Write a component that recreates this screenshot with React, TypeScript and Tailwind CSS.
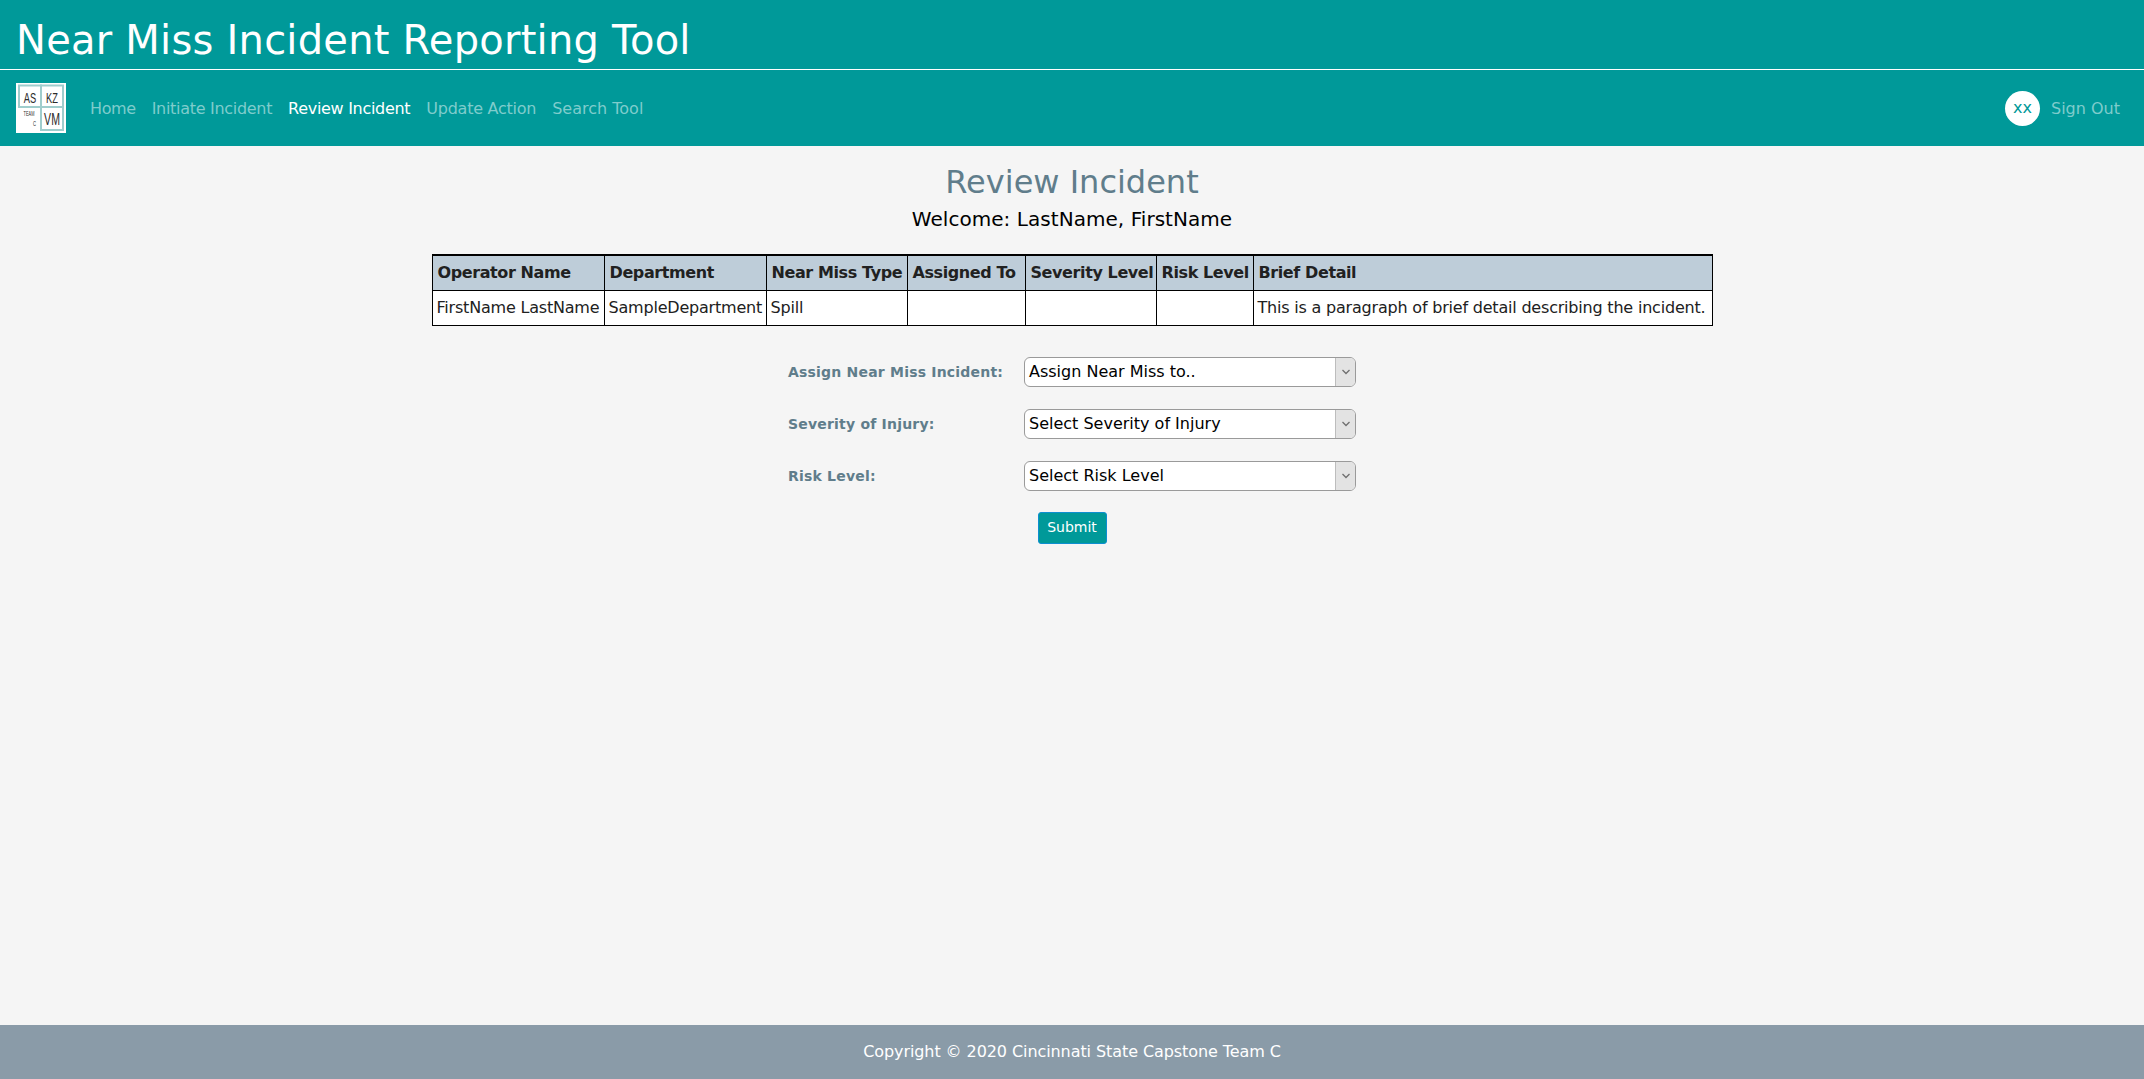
const navLinks = [
  { label: "Home", spacing: "tracking-[-0.4px]" },
  { label: "Initiate Incident", spacing: "tracking-[-0.3px]" },
  { label: "Review Incident", spacing: "tracking-[-0.3px]" },
  { label: "Update Action", spacing: "tracking-[-0.25px]" },
  { label: "Search Tool", spacing: "tracking-[0px]" },
];

const headers = [
  { label: "Operator Name", width: "w-[172px]" },
  { label: "Department", width: "w-[162px]" },
  { label: "Near Miss Type", width: "w-[141px]" },
  { label: "Assigned To", width: "w-[118px]" },
  { label: "Severity Level", width: "w-[131px]" },
  { label: "Risk Level", width: "w-[97px]" },
  { label: "Brief Detail", width: "w-[459px]" },
];
const row = ["FirstName LastName", "SampleDepartment", "Spill", "", "", "", "This is a paragraph of brief detail describing the incident."];

const fields = [
  { label: "Assign Near Miss Incident:", placeholder: "Assign Near Miss to.." },
  { label: "Severity of Injury:", placeholder: "Select Severity of Injury" },
  { label: "Risk Level:", placeholder: "Select Risk Level" },
];

const Logo = () => (
  <svg width="50" height="50" viewBox="0 0 50 50" className="block shrink-0">
    <rect width="50" height="50" fill="#fff" />
    <g fill="none" stroke="#9fcdcd" strokeWidth="2">
      <rect x="3" y="2.5" width="22" height="21.5" />
      <rect x="25" y="2.5" width="22" height="21.5" />
      <rect x="25" y="24" width="22" height="23" />
    </g>
    <g fontFamily="'Liberation Sans',sans-serif" fill="#2b2b2b" textAnchor="middle">
      <text transform="translate(14 20) scale(0.62 1)" fontSize="15">AS</text>
      <text transform="translate(36 20) scale(0.62 1)" fontSize="15">KZ</text>
      <text transform="translate(36 42) scale(0.66 1)" fontSize="16">VM</text>
      <text transform="translate(13 33) scale(0.6 1)" fontSize="6.5">TEAM</text>
      <text transform="translate(18.5 43) scale(0.6 1)" fontSize="7">C</text>
    </g>
  </svg>
);

const SelectBox = ({ text }: { text: string }) => (
  <div className="flex h-[30px] w-[332px] overflow-hidden rounded-[6px] border border-[#9a9a9a] bg-white">
    <span className="flex-1 pl-[4px] text-[16px] leading-[28px] text-black">{text}</span>
    <span className="flex w-[20px] items-center justify-center border-l border-[#bdbdbd] bg-[#e3e3e3]">
      <svg width="10" height="6" viewBox="0 0 10 6" fill="none" stroke="#6f6f6f" strokeWidth="1.3">
        <path d="M1.5 1l3.5 3.5L8.5 1" />
      </svg>
    </span>
  </div>
);

export default function App() {
  return (
    <div className="flex min-h-[1079px] flex-col bg-[#f5f5f5] font-['DejaVu_Sans',Verdana,sans-serif]">
      <header className="bg-[#009999]">
        <div className="h-[70px] border-b border-white pl-[16px]">
          <h1 className="text-[40px] leading-[80px] font-normal tracking-[0.23px] text-white">
            Near Miss Incident Reporting Tool
          </h1>
        </div>
        <nav className="flex h-[76px] items-center pr-[24px] pl-[16px]">
          <Logo />
          <ul className="ml-[16px] flex flex-1 items-center pt-[1px]">
            {navLinks.map((link) => (
              <li
                key={link.label}
                className={`px-[8px] text-[16px] ${link.spacing} ${link.label === "Review Incident" ? "text-white" : "text-[#7fcccc]"}`}
              >
                {link.label}
              </li>
            ))}
          </ul>
          <div className="flex h-[35px] w-[35px] items-center justify-center rounded-full bg-white text-[16px] text-[#009999]">
            xx
          </div>
          <span className="ml-[11px] pt-[1px] text-[16px] text-[#7fcccc]">Sign Out</span>
        </nav>
      </header>

      <main className="flex flex-1 flex-col items-center">
        <h2 className="mt-[14px] text-[32px] leading-[44px] font-normal text-[#607d8b]">Review Incident</h2>
        <p className="mt-[1px] text-[20px] leading-[28px] tracking-[0.05px] text-black">Welcome: LastName, FirstName</p>

        <table className="mt-[21px] w-[1280px] table-fixed border-collapse border-t-2 border-black bg-white text-[16px] text-[#212121]">
          <thead>
            <tr className="bg-[#becdd9]">
              {headers.map((h) => (
                <th
                  key={h.label}
                  className={`h-[35px] border border-black pt-[1px] pl-[5px] text-left font-bold tracking-[-0.4px] whitespace-nowrap ${h.width}`}
                >
                  {h.label}
                </th>
              ))}
            </tr>
          </thead>
          <tbody>
            <tr>
              {row.map((cell, i) => (
                <td key={i} className="h-[35px] border border-black pt-[1px] pl-[4px] tracking-[-0.2px] whitespace-nowrap">
                  {cell}
                </td>
              ))}
            </tr>
          </tbody>
        </table>

        <form className="mt-[31px] ml-[6px] flex w-[574px] flex-col gap-[22px]">
          {fields.map((f) => (
            <div key={f.label} className="flex items-center">
              <label className="w-[236px] pt-[1px] text-[14px] font-bold tracking-[0.2px] text-[#607d8b]">{f.label}</label>
              <SelectBox text={f.placeholder} />
            </div>
          ))}
        </form>
        <button className="mt-[21px] h-[32px] w-[69px] rounded-[3px] border border-[#0d8fd0] bg-[#009999] text-[14px] text-white">
          Submit
        </button>
      </main>

      <footer className="flex h-[54px] items-center justify-center bg-[#8a9ba8] text-[16px] tracking-[-0.08px] text-white">
        Copyright © 2020 Cincinnati State Capstone Team C
      </footer>
    </div>
  );
}
